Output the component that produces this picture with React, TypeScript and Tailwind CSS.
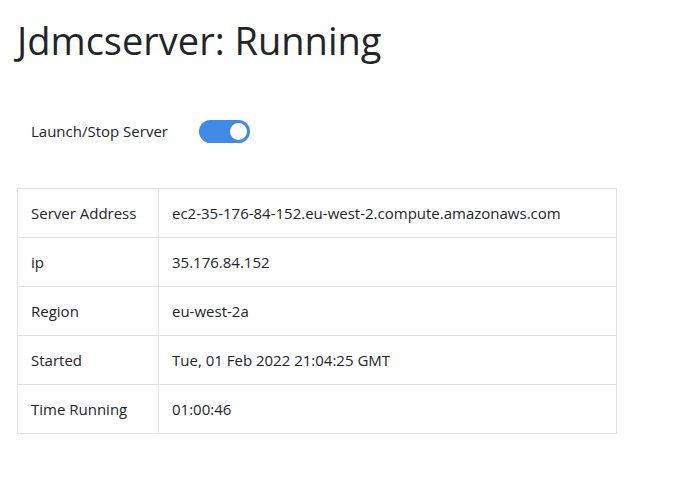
import React, { useState } from "react";

const rows: [string, string][] = [
  ["Server Address", "ec2-35-176-84-152.eu-west-2.compute.amazonaws.com"],
  ["ip", "35.176.84.152"],
  ["Region", "eu-west-2a"],
  ["Started", "Tue, 01 Feb 2022 21:04:25 GMT"],
  ["Time Running", "01:00:46"],
];

export default function App() {
  const [running, setRunning] = useState(true);

  return (
    <div className="min-h-screen bg-white text-[#212529] font-['Open_Sans',sans-serif]">
      <div className="px-[17px] pt-[14px]">
        <h1 className="text-[38px] leading-[52px] font-normal">Jdmcserver: Running</h1>

        <div className="mt-[54px] flex items-center pl-[14px]">
          <span className="text-[15px] w-[168px]">Launch/Stop Server</span>
          <button
            onClick={() => setRunning(!running)}
            className={`w-[51px] h-[23px] rounded-full flex items-center px-[3px] ${
              running ? "bg-[#3f8be6] justify-end" : "bg-gray-300 justify-start"
            }`}
          >
            <span className="w-[17px] h-[17px] rounded-full bg-white" />
          </button>
        </div>

        <table className="mt-[45px] w-[600px] border-collapse text-[15px]">
          <tbody>
            {rows.map(([k, v]) => (
              <tr key={k} className="h-[49px]">
                <td className="w-[141px] border border-[#dee2e6] px-[13px]">{k}</td>
                <td className="border border-[#dee2e6] px-[13px]">{v}</td>
              </tr>
            ))}
          </tbody>
        </table>
      </div>
    </div>
  );
}
